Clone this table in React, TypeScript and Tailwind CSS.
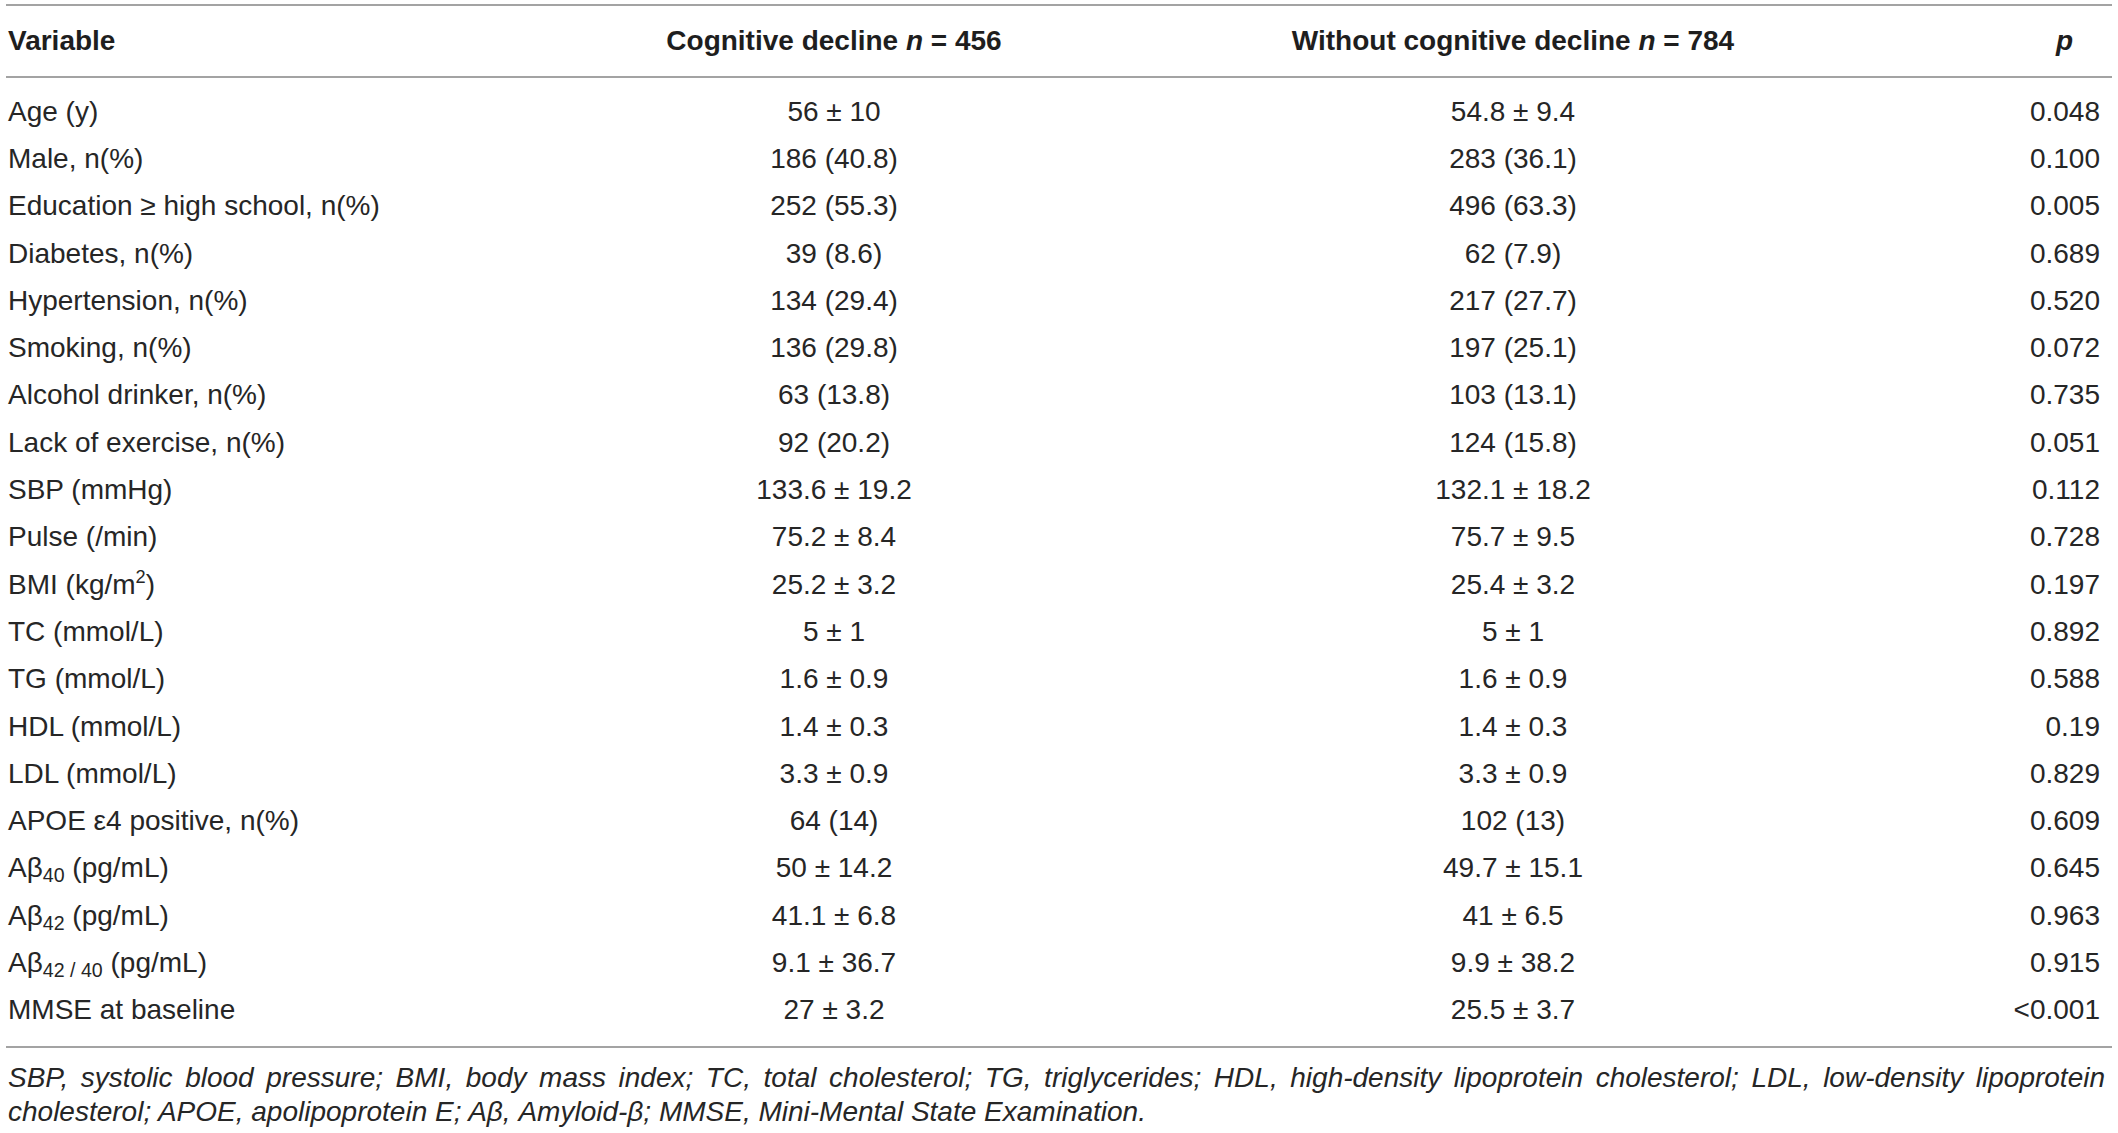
const rows: [React.ReactNode, string, string, string][] = [
  ['Age (y)', '56 ± 10', '54.8 ± 9.4', '0.048'],
  ['Male, n(%)', '186 (40.8)', '283 (36.1)', '0.100'],
  ['Education ≥ high school, n(%)', '252 (55.3)', '496 (63.3)', '0.005'],
  ['Diabetes, n(%)', '39 (8.6)', '62 (7.9)', '0.689'],
  ['Hypertension, n(%)', '134 (29.4)', '217 (27.7)', '0.520'],
  ['Smoking, n(%)', '136 (29.8)', '197 (25.1)', '0.072'],
  ['Alcohol drinker, n(%)', '63 (13.8)', '103 (13.1)', '0.735'],
  ['Lack of exercise, n(%)', '92 (20.2)', '124 (15.8)', '0.051'],
  ['SBP (mmHg)', '133.6 ± 19.2', '132.1 ± 18.2', '0.112'],
  ['Pulse (/min)', '75.2 ± 8.4', '75.7 ± 9.5', '0.728'],
  [
    <>
      BMI (kg/m<sup className="text-[0.65em] -top-[0.6em]">2</sup>)
    </>,
    '25.2 ± 3.2',
    '25.4 ± 3.2',
    '0.197',
  ],
  ['TC (mmol/L)', '5 ± 1', '5 ± 1', '0.892'],
  ['TG (mmol/L)', '1.6 ± 0.9', '1.6 ± 0.9', '0.588'],
  ['HDL (mmol/L)', '1.4 ± 0.3', '1.4 ± 0.3', '0.19'],
  ['LDL (mmol/L)', '3.3 ± 0.9', '3.3 ± 0.9', '0.829'],
  ['APOE ε4 positive, n(%)', '64 (14)', '102 (13)', '0.609'],
  [
    <>
      Aβ<sub className="text-[0.7em]">40</sub> (pg/mL)
    </>,
    '50 ± 14.2',
    '49.7 ± 15.1',
    '0.645',
  ],
  [
    <>
      Aβ<sub className="text-[0.7em]">42</sub> (pg/mL)
    </>,
    '41.1 ± 6.8',
    '41 ± 6.5',
    '0.963',
  ],
  [
    <>
      Aβ<sub className="text-[0.7em]">42 / 40</sub> (pg/mL)
    </>,
    '9.1 ± 36.7',
    '9.9 ± 38.2',
    '0.915',
  ],
  ['MMSE at baseline', '27 ± 3.2', '25.5 ± 3.7', '<0.001'],
]

const Rule = () => <div className="h-[2px] bg-[#a3a3a3]" />

export default function App() {
  return (
    <div className="min-h-[1133px] bg-white text-[#262626] font-['Liberation_Sans',Arial,sans-serif]">
      <div className="mx-[6px] pt-[4px]">
        <Rule />
        <div className="grid h-[70px] grid-cols-[494px_668px_690px_1fr] items-center text-[28px] font-bold text-[#1e1e1e]">
          <div className="pl-[2px]">Variable</div>
          <div className="text-center">
            Cognitive decline <i>n</i> = 456
          </div>
          <div className="text-center">
            Without cognitive decline <i>n</i> = 784
          </div>
          <div className="pr-[39px] text-right">
            <i>p</i>
          </div>
        </div>
        <Rule />
        <div className="pt-[10px] pb-[12px] text-[28px]">
          {rows.map((r, i) => (
            <div
              key={i}
              className="grid h-[47.3px] grid-cols-[494px_668px_690px_1fr] items-center whitespace-nowrap"
            >
              <div className="pl-[2px]">{r[0]}</div>
              <div className="text-center">{r[1]}</div>
              <div className="text-center">{r[2]}</div>
              <div className="pr-[12px] text-right">{r[3]}</div>
            </div>
          ))}
        </div>
        <Rule />
        <p className="pt-[13px] pl-[2px] pr-[7px] text-justify text-[28px] leading-[34px] italic">
          SBP, systolic blood pressure; BMI, body mass index; TC, total cholesterol; TG, triglycerides; HDL,
          high-density lipoprotein cholesterol; LDL, low-density lipoprotein cholesterol; APOE, apolipoprotein E;
          Aβ, Amyloid-β; MMSE, Mini-Mental State Examination.
        </p>
      </div>
    </div>
  )
}
